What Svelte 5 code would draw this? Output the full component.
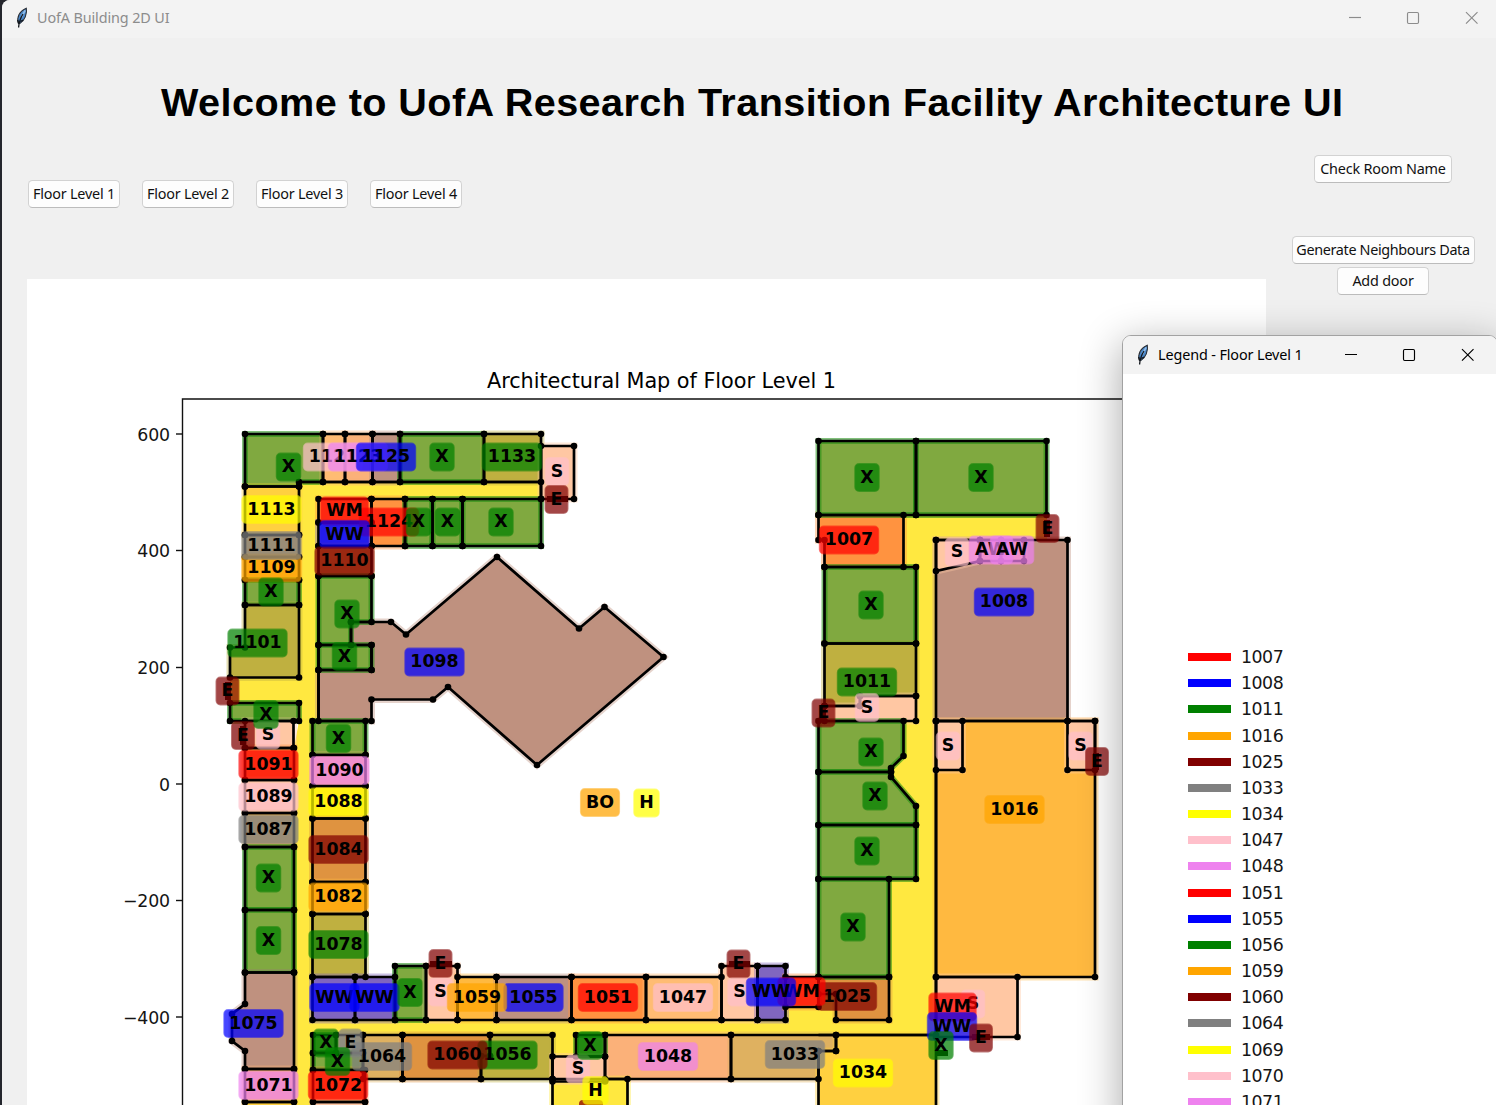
<script>
  const floors = ['Floor Level 1', 'Floor Level 2', 'Floor Level 3', 'Floor Level 4'];

  const G = '#80a940', OL = '#bfb040', OR = '#ff9340', BR = '#bf917f', PK = '#ffc7a3';
  const YL = '#ffd040', OG = '#ffb940', MR = '#df9340', GY = '#dfb160', VI = '#fbb179', BL = '#8066bf';

  const r = (x1, y1, x2, y2) => `${x1},${y1} ${x2},${y1} ${x2},${y2} ${x1},${y2}`;

  const corridors = [
    '299,482 541,482 541,499 318,499 318,721 312,721 312,1020 785,1020 785,977 818,977 818,721 825,706 825,567 903,567 903,515 1047,515 1047,540 936,540 936,1035 312,1035 312,1110 294,1110 294,748 299,721 299,703 230,703 230,678 299,678',
    r(552.5, 1035, 577, 1057),
  ];

  // Each room is a fill colour and an outline in plot pixels.
  const rooms = [
    [G, '245,434 323,434 323,482 299,482 299,486.5 245,486.5'],
    ['#ffbc73', r(323, 434, 345, 482)], [VI, r(345, 434, 372.5, 482)], [BR, r(372.5, 434, 400, 482)],
    [G, r(400, 434, 484, 482)], [OL, r(484, 434, 541, 482)], [PK, r(541, 446, 574, 499)],
    [YL, r(245, 486.5, 299, 535)], [GY, r(245, 535, 299, 557)], [OG, r(245, 557, 299, 580)],
    [G, r(245, 580, 299, 605)], [OL, '245,605 299,605 299,677.5 230,677.5 230,647.5 245,647.5'],
    [G, r(230, 703, 299, 721)], [PK, r(245, 721, 293.5, 748)], [OR, r(245, 748, 294, 780)],
    [PK, r(245, 780, 294, 813)], [GY, r(245, 813, 294, 847)], [G, r(245, 847, 294, 910)],
    [G, r(245, 910, 294, 972.5)],
    [BR, '245,972.5 294,972.5 294,1069 245,1069 245,1051 232,1041 232,1014 245,1004'],
    [VI, r(245, 1069, 294, 1102)], [YL, r(245, 1102, 294, 1130)],
    [OR, r(318.5, 499, 371.5, 522.5)], [BL, r(318.5, 522.5, 371.5, 546)], [MR, r(318.5, 546, 371.5, 576)],
    [OR, r(371.5, 499, 405, 546)], [G, r(405, 499, 432.5, 546)], [G, r(432.5, 499, 462.5, 546)],
    [G, r(462.5, 499, 541, 546)],
    [BR, '351,622 391,622 406,634.5 497,557 579,628.5 604.5,607 663.5,657 537,765 448,687 433,699.5 371.5,699.5 371.5,721 318.5,721 318.5,670 371.5,670 371.5,645 351,645'],
    [G, '318.5,576 371.5,576 371.5,622 351,622 351,645 318.5,645'], [G, r(318.5, 645, 371.5, 670)],
    [G, r(312.5, 721, 365.5, 755)], [VI, r(312.5, 755, 365.5, 786)], [YL, r(312.5, 786, 365.5, 818.5)],
    [MR, r(312.5, 818.5, 365.5, 882)], [OG, r(312.5, 882, 365.5, 914)], [OL, r(312.5, 914, 365.5, 977)],
    [BL, r(312.5, 977, 355, 1020)], [BL, r(355, 977, 395, 1020)], [G, r(395, 966, 426, 1020)],
    [PK, r(426, 966, 457.5, 1020)], [OG, r(457.5, 977, 496.5, 1020)], ['#bf9180', r(496.5, 977, 571.5, 1020)],
    [OR, r(571.5, 977, 646, 1020)], ['#ffbc73', r(646, 977, 721.5, 1020)], [PK, r(721.5, 966, 757.5, 1020)],
    [BL, r(757.5, 966, 785.5, 1020)], [OR, r(785.5, 977, 818.5, 1007)],
    [MR, '818.5,977 889,977 889,1020 836,1020 836,994 818.5,994'],
    [G, r(313, 1035, 336, 1053)], ['#bfb080', r(336, 1035, 363, 1053)], [G, r(313, 1053, 363, 1070)],
    [GY, r(363, 1035, 402.5, 1079)], [OR, r(313, 1070, 365, 1102)], [PK, r(313, 1102, 365, 1130)],
    [MR, '402.5,1035 490,1035 490,1056 481,1056 481,1079 402.5,1079'],
    [OL, '490,1035 552.5,1035 552.5,1079 481,1079 481,1056 490,1056'],
    [VI, r(605, 1035, 731, 1079)], [G, r(576, 1035, 605, 1056.5)],
    ['#ffe840', r(552.5, 1079, 627.5, 1130)], [PK, r(552.5, 1056.5, 605, 1081.5)],
    [GY, '731,1035 836,1035 836,1051 818.5,1051 818.5,1079 731,1079'],
    [YL, '836,1035 936,1035 936,1130 818.5,1130 818.5,1051 836,1051'],
    [OR, '818.5,515 903.5,515 903.5,567 824.5,567 824.5,540 818.5,540'],
    [G, r(818.5, 441, 916, 515)], [G, r(916, 441, 1046.5, 515)], [G, r(824.5, 567, 916, 643.5)],
    [OL, '824.5,643.5 916,643.5 916,696 860,696 860,706 824.5,706'],
    [PK, '824.5,706 860,706 860,696 916,696 916,721 824.5,721'],
    [G, '818.5,721 903.5,721 903.5,756 891,768 891,772 818.5,772'],
    [G, '818.5,772 891,772 891,777 916,806 916,825 818.5,825'],
    [G, r(818.5, 825, 916, 879)], [G, r(818.5, 879, 889, 977)],
    [BR, r(936, 540, 1067.5, 721)], [PK, '936,540 980,540 980,561 936,571'],
    [VI, r(980, 540, 1001, 561)], [VI, r(1001, 540, 1024, 561)],
    [OG, r(936, 721, 1095, 977)], [PK, r(936, 721, 962.5, 770)], [PK, r(1067.5, 721, 1095, 770)],
    [PK, r(936, 977, 1017.5, 1037)],
  ];

  const nodes = rooms.flatMap(([, pts]) => pts.split(' ').map((p) => p.split(',')));

  // Label groups: colour, then [text, centre x, centre y].
  const tags = [
    ['pink', '1121', 333, 457], ['violet', '1123', 358, 457], ['blue', '1125', 386, 457],
    ['green', 'X', 288.5, 467], ['green', 'X', 442, 457], ['green', '1133', 512, 457],
    ['pink', 'S', 557, 471.5], ['maroon', 'E', 556.5, 499.5],
    ['yellow', '1113', 271.5, 509.5], ['orange', '1109', 271.5, 568], ['gray', '1111', 271.5, 545.5],
    ['green', 'X', 271, 592], ['green', '1101', 257.5, 643],
    ['red', '1124', 389, 522], ['red', 'WM', 344.5, 511], ['blue', 'WW', 344.5, 534.5],
    ['maroon', '1110', 344.5, 561], ['green', 'X', 418.5, 522], ['green', 'X', 447.5, 522], ['green', 'X', 501, 522],
    ['green', 'X', 347, 614], ['green', 'X', 344.5, 656.5], ['blue', '1098', 434.5, 662],
    ['maroon', 'E', 227.5, 691], ['maroon', 'E', 243, 735.5], ['pink', 'S', 268, 735], ['green', 'X', 266, 714.5],
    ['red', '1091', 268.5, 764.5], ['pink', '1089', 268.5, 797], ['gray', '1087', 268.5, 829.5],
    ['green', 'X', 268.5, 878], ['green', 'X', 268.5, 940.5], ['blue', '1075', 253.5, 1023.5],
    ['violet', '1071', 268.5, 1085.5],
    ['green', 'X', 338.5, 738.5], ['violet', '1090', 339.5, 770.5], ['yellow', '1088', 338.5, 802],
    ['maroon', '1084', 338.5, 849.5], ['orange', '1082', 338.5, 897], ['green', '1078', 338.5, 944.5],
    ['red', '1072', 338, 1085.5], ['blue', 'WW', 334.5, 997.5], ['blue', 'WW', 374.5, 997.5],
    ['green', 'X', 410, 992.5], ['maroon', 'E', 440.5, 963.5], ['pink', 'S', 440.5, 992],
    ['blue', '1055', 533.5, 997.5], ['orange', '1059', 477, 997.5], ['red', '1051', 608, 997.5],
    ['pink', '1047', 683, 997.5], ['maroon', 'E', 738.5, 964], ['pink', 'S', 739.5, 992],
    ['maroon', '1025', 847, 996.5], ['red', 'WM', 801.5, 991.5], ['blue', 'WW', 771, 992],
    ['gray', '1064', 382, 1056.5], ['green', 'X', 326, 1043], ['gray', 'E', 350.5, 1043], ['green', 'X', 337.5, 1061.5],
    ['green', '1056', 507.5, 1055], ['maroon', '1060', 457.5, 1055],
    ['violet', '1048', 668, 1056.5], ['pink', 'S', 578, 1069], ['green', 'X', 590, 1045.5],
    ['yellow', 'H', 595.5, 1090.5], ['gray', '1033', 795, 1054.5], ['yellow', '1034', 863, 1073],
    ['green', 'X', 867, 477.5], ['green', 'X', 981, 477.5], ['red', '1007', 849, 540], ['green', 'X', 871, 605],
    ['green', '1011', 867, 682], ['pink', 'S', 867, 707.5], ['maroon', 'E', 823.5, 713],
    ['green', 'X', 871, 752], ['green', 'X', 875, 796], ['green', 'X', 867, 851], ['green', 'X', 853, 927],
    ['pink', 'S', 957, 552], ['violet', 'AW', 991, 550], ['violet', 'AW', 1012, 550],
    ['maroon', 'E', 1047.5, 528.5], ['blue', '1008', 1004, 602], ['orange', '1016', 1014.5, 809.5],
    ['pink', 'S', 948, 746], ['pink', 'S', 1080.5, 746], ['maroon', 'E', 1097, 761.5],
    ['pink', 'S', 973, 1004], ['red', 'WM', 952.5, 1007], ['blue', 'WW', 952, 1026.5],
    ['maroon', 'E', 981, 1038], ['green', 'X', 941, 1045.5],
    ['orange', 'BO', 600, 802.5], ['yellow', 'H', 646.5, 803],
  ];
  const adv = { X: 13.4, E: 11.9, S: 12.5, H: 14.5, WW: 38.3, WM: 36.4, AW: 32.6, BO: 28 };
  const boxW = (t) => (adv[t] ?? 48.3) + 10.4;

  // Doorways, drawn as thick short segments.
  const doors = [
    [547, 499, 568, 499], [228, 682, 228, 700], [243, 726, 243, 745], [430, 964, 452, 964],
    [729, 964, 750, 964], [1047, 520, 1047, 537], [823, 705, 823, 720], [1096, 753, 1096, 770],
    [972, 1037, 990, 1037], [936, 1053, 948, 1053],
  ];

  const ticks = [['600', 434], ['400', 550.5], ['200', 667.5], ['0', 784], ['−200', 900.5], ['−400', 1017]];

  const cycle = ['red', 'blue', 'green', 'orange', 'maroon', 'gray', 'yellow', 'pink', 'violet'];
  const legend = ['1007', '1008', '1011', '1016', '1025', '1033', '1034', '1047', '1048', '1051', '1055',
    '1056', '1059', '1060', '1064', '1069', '1070', '1071'];
</script>

{#snippet feather()}
  <svg class="feather" viewBox="0 0 14 22" width="14" height="22">
    <path d="M3.4 16 C1.4 10.5 4.5 4 11.3 1.2 C12.4 7 9.6 13.5 5 16.4 Z" fill="#4a86c8" stroke="#2b2f36" stroke-width="1.1" />
    <path d="M6.4 10 L10.2 3.4" stroke="#8fbce8" stroke-width="1.8" />
    <path d="M3.6 20.5 C4 15 6 10 8 7 M3.6 16.5 L2.6 13 M5.5 14.5 L8 13" fill="none" stroke="#11151b" stroke-width="1.3" />
  </svg>
{/snippet}

{#snippet controls()}
  <svg class="controls" viewBox="0 0 130 14" width="130" height="14" fill="none" stroke="currentColor" stroke-width="1.15">
    <path d="M1 6.5 H13" />
    <rect x="59.5" y="1.5" width="11" height="11" rx="1.2" />
    <path d="M118 1.2 L129.5 12.7 M129.5 1.2 L118 12.7" />
  </svg>
{/snippet}

<div class="desktop">
  <section class="window">
    <header class="titlebar inactive">
      {@render feather()}
      <span class="caption">UofA Building 2D UI</span>
      {@render controls()}
    </header>

    <h1>Welcome to UofA Research Transition Facility Architecture UI</h1>

    <div class="content">
      <main>
        <nav>
          {#each floors as f}
            <button>{f}</button>
          {/each}
        </nav>
        <svg class="plot" viewBox="27 279 1239 826" width="1239" height="826">
          <rect x="27" y="279" width="1239" height="826" fill="#fff" />
          <text class="title" x="661.5" y="388" textLength="349">Architectural Map of Floor Level 1</text>
          <path d="M182.5 1110 V399 H1266" fill="none" stroke="#111" stroke-width="1.4" />
          {#each ticks as [t, y]}
            <path d="M176 {y} H182.5" stroke="#111" stroke-width="1.4" />
            <text class="tick" x="170" y={y + 6.5}>{t}</text>
          {/each}

          {#each corridors as pts}
            <polygon points={pts} fill="#ffe840" />
          {/each}
          {#each rooms as [c, pts]}
            <polygon points={pts} fill={c} />
            <polygon class="halo" class:deep={c === G} points={pts} stroke={c} />
          {/each}
          {#each rooms as [, pts]}
            <polygon class="wall" points={pts} />
          {/each}
          <path class="wall" d="M299 486 V482 H541 V499 M318.5 576 V721 M936 721 V1035 M818.5 1035 H936 M312.5 721 H318.5" />
          {#each nodes as [x, y]}
            <circle cx={x} cy={y} r="3.3" />
          {/each}
          {#each doors as [x1, y1, x2, y2]}
            <line class="door" {x1} {y1} {x2} {y2} />
          {/each}
          <rect x="579" y="1100" width="24" height="12" rx="4" fill="#a8380c" />

          {#each tags as [c, t, x, y]}
            <rect class="tag" x={x - boxW(t) / 2} y={y - 13.6} width={boxW(t)} height="27.2" rx="4" fill={c} stroke={c} />
            <text class="room" {x} y={y + 5}>{t}</text>
          {/each}
        </svg>
      </main>

      <aside>
        <button>Check Room Name</button>
        <button class="gen">Generate Neighbours Data</button>
        <button>Add door</button>
      </aside>
    </div>
  </section>

  <section class="legend">
    <header class="titlebar">
      {@render feather()}
      <span class="caption">Legend - Floor Level 1</span>
      {@render controls()}
    </header>
    <ul>
      {#each legend as n, i}
        <li><svg width="43" height="10"><rect y="1" width="43" height="8" fill={cycle[i % 9]} /></svg>{n}</li>
      {/each}
    </ul>
  </section>
</div>

<style>
  :global(body) { margin: 0; overflow: hidden; }
  .desktop {
    position: relative;
    width: 1496px;
    height: 1105px;
    overflow: hidden;
    background: #24262d;
    padding-left: 2px;
    box-sizing: border-box;
    font-family: 'Noto Sans', 'Open Sans', sans-serif;
  }
  .window {
    width: 1494px;
    height: 1105px;
    background: #f0f0f0;
    border-radius: 8px 0 0 0;
    overflow: hidden;
  }
  .titlebar {
    display: flex;
    align-items: center;
    height: 38px;
    box-sizing: border-box;
    padding: 0 18px 2px 13px;
    background: #f3f3f3;
    color: #000;
    font-size: 14.4px;
  }
  .inactive { color: #8c8c8c; }
  .feather { flex: none; }
  .caption { margin-left: 8px; padding-bottom: 2px; white-space: nowrap; letter-spacing: -0.12px; }
  .controls { margin-left: auto; flex: none; }
  h1 {
    margin: 0;
    height: 117px;
    padding: 41px 0 0 159px;
    box-sizing: border-box;
    font: bold 39.6px/46px 'Liberation Sans', Arial, sans-serif;
    letter-spacing: 0.45px;
    color: #000;
    white-space: nowrap;
  }
  .content { display: flex; }
  main { width: 1239px; padding-left: 25px; flex: none; }
  nav { display: flex; gap: 22px; height: 124px; padding: 25px 0 0 1px; box-sizing: border-box; }
  nav button { width: 92px; }
  button {
    height: 28px;
    padding: 0;
    min-width: 92px;
    border: 1px solid #d2d2d2;
    border-bottom-color: #bcbcbc;
    border-radius: 4.5px;
    background: #fdfdfd;
    color: #111;
    font: 14.4px/24px 'Noto Sans', 'Open Sans', sans-serif;
    letter-spacing: -0.2px;
    white-space: nowrap;
    flex: none;
  }
  .plot { display: block; }
  aside { flex: 1; display: flex; flex-direction: column; align-items: center; padding-left: 4px; }
  aside button:first-child { width: 138px; margin-bottom: 53px; }
  aside .gen { width: 183px; margin-bottom: 3px; letter-spacing: -0.35px; }

  text { font-family: 'DejaVu Sans', sans-serif; font-size: 17.36px; fill: #000; }
  .title { font-size: 20.8px; text-anchor: middle; }
  .tick { text-anchor: end; fill: #151515; letter-spacing: -0.15px; }
  .room { font-weight: bold; text-anchor: middle; }
  .halo { fill: none; stroke-width: 7; opacity: 0.4; }
  .halo.deep { stroke: #1c8c10; stroke-width: 6; opacity: 0.55; }
  .wall { fill: none; stroke: #000; stroke-width: 2.7; }
  .door { stroke: #000; stroke-width: 6; }
  .tag { opacity: 0.72; stroke-width: 1.7; stroke-opacity: 0.7; }

  .legend {
    position: absolute;
    left: 1122px;
    top: 335px;
    width: 376px;
    height: 800px;
    box-sizing: border-box;
    border: 1px solid #a2a2a2;
    border-radius: 9px 9px 0 0;
    background: #fff;
    overflow: hidden;
    box-shadow: 0 10px 40px 2px rgba(0, 0, 0, 0.32);
  }
  .legend .titlebar { padding: 0 23px 0 13px; }
  ul { list-style: none; margin: 0; padding: 270px 0 0 65px; }
  li {
    display: flex;
    align-items: center;
    gap: 10px;
    height: 26.18px;
    font: 17.36px/26px 'DejaVu Sans', sans-serif;
    letter-spacing: -0.5px;
    color: #151515;
  }
</style>
